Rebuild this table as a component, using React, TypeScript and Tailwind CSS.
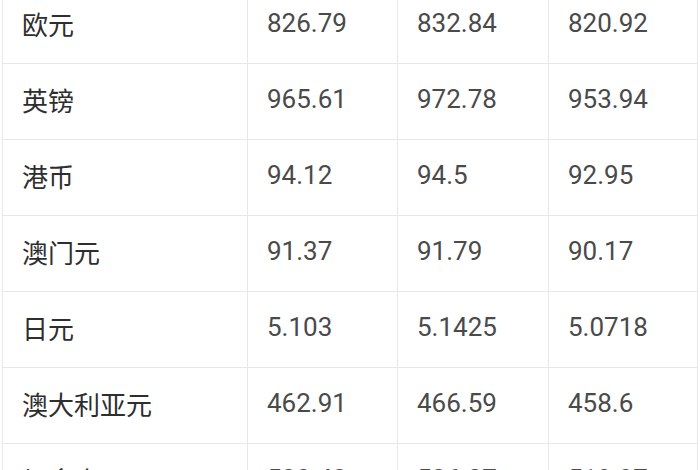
import React from "react"

const rows: [string, string, string, string][] = [
  ["欧元", "826.79", "832.84", "820.92"],
  ["英镑", "965.61", "972.78", "953.94"],
  ["港币", "94.12", "94.5", "92.95"],
  ["澳门元", "91.37", "91.79", "90.17"],
  ["日元", "5.103", "5.1425", "5.0718"],
  ["澳大利亚元", "462.91", "466.59", "458.6"],
  ["加拿大元", "522.43", "526.27", "519.97"],
]

export default function App() {
  return (
    <div className="w-[700px] h-[470px] overflow-hidden bg-white">
      <div className="mt-[-12px] ml-[2px] border-l border-[#e8e8e8] grid grid-cols-[245px_150px_151px_149px]">
        {rows.map(row =>
          row.map((cell, i) => (
            <div
              key={row[0] + i}
              className={
                "h-[76px] flex items-center pl-[19px] pb-[4px] border-r border-b border-[#e8e8e8] text-[26px] " +
                (i === 0 ? "text-[#2e2e2e]" : "text-[#4a4a4a]")
              }
              style={{ fontFamily: i === 0 ? '"Noto Sans CJK SC", sans-serif' : 'Roboto, "Noto Sans", sans-serif' }}
            >
              {cell}
            </div>
          ))
        )}
      </div>
    </div>
  )
}
